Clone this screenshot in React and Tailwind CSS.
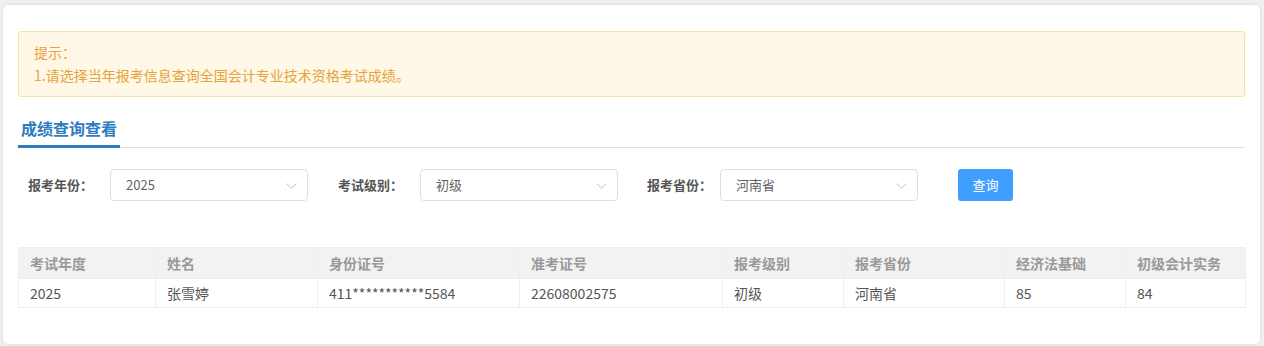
import React from 'react';

const font = { fontFamily: '"Noto Sans CJK SC", "Noto Sans", sans-serif' };

const Chevron = () => (
    <svg width="11" height="6" viewBox="0 0 11 6" className="absolute right-[10px] top-[13px]">
        <path d="M0.5 0.5 L5.5 5.2 L10.5 0.5" fill="none" stroke="#c0c4cc" strokeWidth="1" />
    </svg>
);

const Select = ({ value }) => (
    <div className="relative w-[198px] h-[32px] border border-[#dcdfe6] rounded-[4px] bg-white pl-[15px] text-[13px] leading-[30px] text-[#606266]">
        {value}
        <Chevron />
    </div>
);

const columns = [
    { title: '考试年度', width: 137 },
    { title: '姓名', width: 162 },
    { title: '身份证号', width: 202 },
    { title: '准考证号', width: 203 },
    { title: '报考级别', width: 121 },
    { title: '报考省份', width: 161 },
    { title: '经济法基础', width: 121 },
    { title: '初级会计实务', width: 120 },
];

const row = ['2025', '张雪婷', '411***********5584', '22608002575', '初级', '河南省', '85', '84'];

const App = () => {
    return (
        <div className="min-h-screen bg-[#f0f0f0] pt-[5px] pl-[3px]" style={font}>
            {/* card */}
            <div className="w-[1257px] bg-white rounded-[5px] shadow-[0_0_3px_rgba(0,0,0,0.12)] px-[15px] pt-[26px] pb-[36px]">
                {/* tip */}
                <div className="h-[66px] border border-[#f7e1a1] bg-[#fff8e6] rounded-[3px] px-[15px] py-[9px] text-[14px] leading-[23px] text-[#e6a23c]">
                    <div>提示：</div>
                    <div>1.请选择当年报考信息查询全国会计专业技术资格考试成绩。</div>
                </div>

                {/* tab */}
                <div className="mt-[15px] h-[36px] flex border-b border-[#dcdfe6]">
                    <div className="h-[36px] -mb-px px-[3px] border-b-[3px] border-[#2e7bbf] text-[16px] font-bold leading-[33px] text-[#2d7bc2]">
                        成绩查询查看
                    </div>
                </div>

                {/* filters */}
                <div className="mt-[21px] flex items-center pl-[10px]">
                    <span className="w-[82px] text-[13px] font-bold text-[#555]">报考年份：</span>
                    <Select value="2025" />
                    <span className="ml-[30px] w-[82px] text-[13px] font-bold text-[#555]">考试级别：</span>
                    <Select value="初级" />
                    <span className="ml-[29px] w-[73px] text-[13px] font-bold text-[#555]">报考省份：</span>
                    <Select value="河南省" />
                    <button className="ml-[40px] w-[55px] h-[32px] rounded-[3px] bg-[#409eff] text-white text-[13px]">
                        查询
                    </button>
                </div>

                {/* table */}
                <table className="mt-[46px] table-fixed w-[1227px] border-collapse">
                    <colgroup>
                        {columns.map((c) => (
                            <col key={c.title} style={{ width: c.width }} />
                        ))}
                    </colgroup>
                    <thead>
                        <tr className="bg-[#f2f2f2] h-[31px]">
                            {columns.map((c) => (
                                <th key={c.title} className="border border-[#ebeef5] pl-[11px] text-left text-[14px] font-bold text-[#999] leading-[29px]">
                                    {c.title}
                                </th>
                            ))}
                        </tr>
                    </thead>
                    <tbody>
                        <tr className="h-[29px]">
                            {row.map((v, i) => (
                                <td key={i} className="border border-[#ebeef5] pl-[11px] text-[14px] text-[#555] leading-[27px]">
                                    {v}
                                </td>
                            ))}
                        </tr>
                    </tbody>
                </table>
            </div>
        </div>
    );
};

export default App;
